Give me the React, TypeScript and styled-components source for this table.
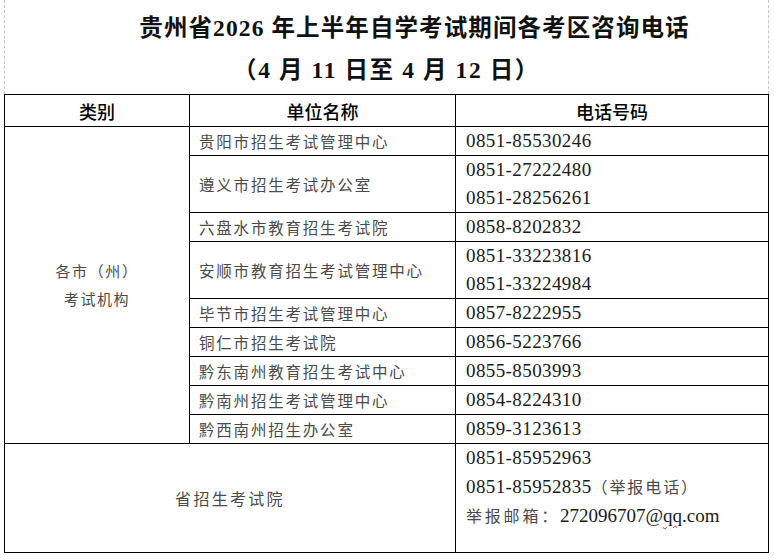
import React from 'react';
import styled, { createGlobalStyle } from 'styled-components';

const GlobalStyle = createGlobalStyle`
  html, body {
    margin: 0;
    padding: 0;
    background: #fff;
  }
`;

const CJK = '"Noto Sans CJK SC", sans-serif';
const SERIF = '"Liberation Serif", "Noto Sans CJK SC", serif';

type Unit = { name: string; phones: string[]; h: number };

const units: Unit[] = [
  { name: '贵阳市招生考试管理中心', phones: ['0851-85530246'], h: 29 },
  { name: '遵义市招生考试办公室', phones: ['0851-27222480', '0851-28256261'], h: 57 },
  { name: '六盘水市教育招生考试院', phones: ['0858-8202832'], h: 29 },
  { name: '安顺市教育招生考试管理中心', phones: ['0851-33223816', '0851-33224984'], h: 57 },
  { name: '毕节市招生考试管理中心', phones: ['0857-8222955'], h: 29 },
  { name: '铜仁市招生考试院', phones: ['0856-5223766'], h: 29 },
  { name: '黔东南州教育招生考试中心', phones: ['0855-8503993'], h: 28 },
  { name: '黔南州招生考试管理中心', phones: ['0854-8224310'], h: 29 },
  { name: '黔西南州招生办公室', phones: ['0859-3123613'], h: 29 },
];

export default function App() {
  return (
    <Page>
      <GlobalStyle />
      <Header>
        <TitleLine $shift={56} $gap={1.1}>
          贵州省2026 年上半年自学考试期间各考区咨询电话
        </TitleLine>
        <TitleLine $gap={1.6}>（4 月 11 日至 4 月 12 日）</TitleLine>
      </Header>
      <Table>
        <colgroup>
          <col style={{ width: 185 }} />
          <col style={{ width: 266 }} />
          <col style={{ width: 313 }} />
        </colgroup>
        <tbody>
          <Row $h={32}>
            <HeadCell>类别</HeadCell>
            <HeadCell>单位名称</HeadCell>
            <HeadCell>电话号码</HeadCell>
          </Row>
          {units.map((u, i) => (
            <Row key={u.name} $h={u.h}>
              {i === 0 && (
                <CategoryCell rowSpan={units.length}>
                  <div>各市（州）</div>
                  <div>考试机构</div>
                </CategoryCell>
              )}
              <NameCell>{u.name}</NameCell>
              <PhoneCell>
                {u.phones.map((p) => (
                  <PhoneLine key={p}>{p}</PhoneLine>
                ))}
              </PhoneCell>
            </Row>
          ))}
          <Row $h={109}>
            <CategoryCell colSpan={2}>
              <Spaced $size={16} $gap={2.3}>省招生考试院</Spaced>
            </CategoryCell>
            <PhoneCell $top>
              <PhoneLine>0851-85952963</PhoneLine>
              <PhoneLine>
                0851-85952835
                <Spaced $size={16} $gap={1.9}>（举报电话）</Spaced>
              </PhoneLine>
              <PhoneLine>
                <Spaced $size={16} $gap={2.8}>举报邮箱：</Spaced>
                <Email>
                  272096707@<Misspelt>qq</Misspelt>.com
                </Email>
              </PhoneLine>
            </PhoneCell>
          </Row>
        </tbody>
      </Table>
    </Page>
  );
}

const Page = styled.div`
  width: 774px;
  height: 560px;
  padding-left: 4px;
  box-sizing: border-box;
  background: #fff;
`;

const Header = styled.header`
  width: 765px;
  height: 94px;
  box-sizing: border-box;
  padding-top: 11px;
  border-left: 1px dashed #c4c4c4;
  border-right: 1px dashed #c4c4c4;
  display: flex;
  flex-direction: column;
  align-items: center;
  gap: 8px;
`;

const TitleLine = styled.div<{ $shift?: number; $gap: number }>`
  font-family: ${SERIF};
  font-size: 23.5px;
  font-weight: 700;
  line-height: 34px;
  letter-spacing: ${(p) => p.$gap}px;
  color: #111;
  padding-left: ${(p) => p.$shift ?? 0}px;
  white-space: nowrap;
`;

const Table = styled.table`
  width: 765px;
  border-collapse: collapse;
  table-layout: fixed;
  border: 1px solid #000;
`;

const Row = styled.tr<{ $h: number }>`
  height: ${(p) => p.$h}px;
`;

const Cell = styled.td`
  border: 1px solid #000;
  padding: 0;
  vertical-align: middle;
`;

const HeadCell = styled(Cell).attrs({ as: 'th' })`
  font-family: ${CJK};
  font-size: 18px;
  font-weight: 500;
  color: #000;
  text-align: center;
  line-height: 24px;
`;

const CategoryCell = styled(Cell)`
  font-family: ${CJK};
  font-size: 15px;
  letter-spacing: 1.6px;
  line-height: 28px;
  color: #4a4a4a;
  text-align: center;
`;

const NameCell = styled(Cell)`
  padding-left: 9px;
  font-family: ${CJK};
  font-size: 15.5px;
  letter-spacing: 1.8px;
  color: #4a4a4a;
  white-space: nowrap;
`;

const PhoneCell = styled(Cell)<{ $top?: boolean }>`
  padding-left: 10px;
  vertical-align: ${(p) => (p.$top ? 'top' : 'middle')};
  font-family: ${SERIF};
  font-size: 19px;
  letter-spacing: 0.4px;
  color: #1a1a1a;
`;

const PhoneLine = styled.div`
  line-height: 28px;
  white-space: nowrap;
`;

const Spaced = styled.span<{ $size: number; $gap: number }>`
  font-family: ${CJK};
  font-size: ${(p) => p.$size}px;
  letter-spacing: ${(p) => p.$gap}px;
  color: #4a4a4a;
`;

const Email = styled.span`
  letter-spacing: 0;
`;

const Misspelt = styled.span`
  text-decoration: underline wavy #e02020;
  text-decoration-thickness: 1px;
  text-underline-offset: 3px;
`;
